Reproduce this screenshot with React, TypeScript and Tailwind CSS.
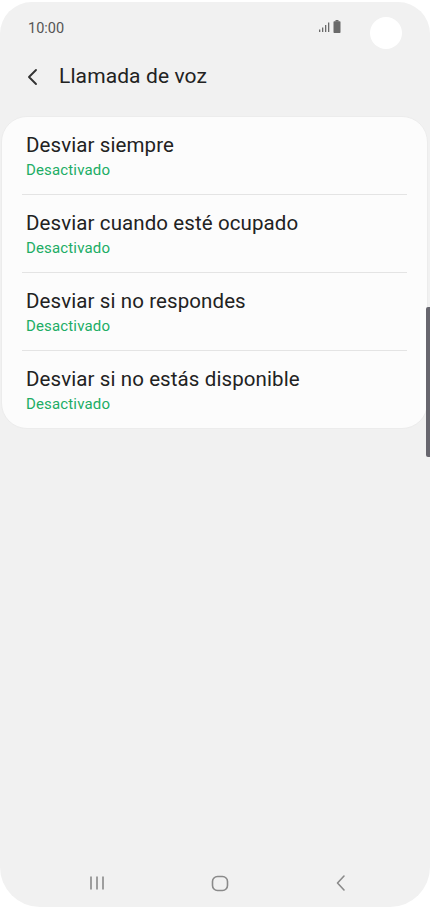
import React from "react";

const items = [
  "Desviar siempre",
  "Desviar cuando esté ocupado",
  "Desviar si no respondes",
  "Desviar si no estás disponible",
];

const StatusBar = () => (
  <div className="flex items-start h-[54px] pl-[28px] pr-[28px]">
    <span className="text-[14.5px] leading-[18px] text-[#555555] mt-[18px]">10:00</span>
    <div className="ml-auto flex items-end gap-[3px] mt-[18px] mr-[29px]">
      <svg width="12" height="12" viewBox="0 0 12 12">
        <rect x="1" y="8.5" width="1.3" height="2.5" fill="#6a6a6a" />
        <rect x="4" y="6.5" width="1.3" height="4.5" fill="#6a6a6a" />
        <rect x="7" y="4" width="1.3" height="7" fill="#6a6a6a" />
        <rect x="10" y="1.5" width="1.3" height="9.5" fill="#6a6a6a" />
      </svg>
      <svg width="8" height="13" viewBox="0 0 8 13">
        <rect x="2.5" y="0" width="3" height="1.5" fill="#6a6a6a" />
        <rect x="0.5" y="1.2" width="7" height="11.8" rx="0.8" fill="#6a6a6a" />
      </svg>
    </div>
    <div className="w-[32px] h-[32px] rounded-full bg-white mt-[15px]" />
  </div>
);

const Header = () => (
  <div className="flex items-center h-[42px] pl-[26px]">
    <svg width="14" height="18" viewBox="0 0 14 18" className="mr-[19px]">
      <path d="M10 2 L3 9 L10 16" fill="none" stroke="#333" strokeWidth="1.9" strokeLinecap="round" strokeLinejoin="round" />
    </svg>
    <span className="text-[21px] text-[#222222] tracking-[0.1px]">Llamada de voz</span>
  </div>
);

const NavBar = () => (
  <div className="mt-auto h-[50px] flex items-center justify-center pt-[2px]">
    <div className="flex w-[260px] justify-between items-center ml-[5px]">
      <svg width="18" height="16" viewBox="0 0 18 16">
        <path d="M3 1.5v13M9 1.5v13M15 1.5v13" stroke="#8a8a8a" strokeWidth="1.6" />
      </svg>
      <svg width="18" height="17" viewBox="0 0 18 17">
        <rect x="1.5" y="1.5" width="15" height="14" rx="5" fill="none" stroke="#8a8a8a" strokeWidth="1.6" />
      </svg>
      <svg width="14" height="18" viewBox="0 0 14 18">
        <path d="M10 2 L3.5 9 L10 16" fill="none" stroke="#8a8a8a" strokeWidth="1.6" strokeLinecap="round" strokeLinejoin="round" />
      </svg>
    </div>
  </div>
);

export default function App() {
  return (
    <div className="w-[430px] h-[907px] bg-white" style={{ fontFamily: "Roboto, 'Noto Sans', sans-serif" }}>
      <div className="relative w-[430px] h-[905px] mt-[2px] bg-[#f1f1f1] rounded-t-[32px] rounded-b-[40px] flex flex-col overflow-hidden">
        <StatusBar />
        <Header />
        <div className="mt-[18px] mx-[1px] w-[427px] bg-[#fcfcfc] rounded-[26px] border border-[#ececec]">
          {items.map((title, i) => (
            <div key={title}>
              <div className="h-[77px] pl-[24px] flex flex-col justify-center pt-[2px]">
                <div className="text-[20.5px] leading-[24px] tracking-[0.1px] text-[#222222]">{title}</div>
                <div className="text-[15px] leading-[20px] tracking-[0.15px] text-[#20ad65] mt-[3px]">Desactivado</div>
              </div>
              {i < items.length - 1 && <div className="mx-[20px] h-px bg-[#e4e4e4]" />}
            </div>
          ))}
        </div>
        <div className="absolute right-0 top-[305px] w-[4px] h-[150px] bg-[#67666e] rounded-l-[2px]" />
        <NavBar />
      </div>
    </div>
  );
}
